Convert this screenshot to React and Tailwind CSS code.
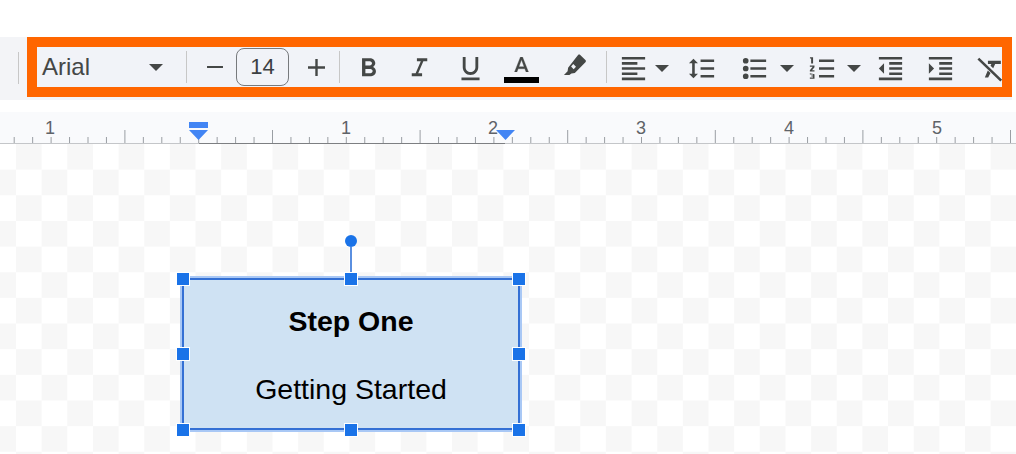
const ICONS = {
  bold: 'M15.6 10.79c.97-.67 1.65-1.77 1.65-2.79 0-2.26-1.75-4-4-4H7v14h7.04c2.09 0 3.71-1.7 3.71-3.79 0-1.52-.86-2.82-2.15-3.42zM9.6 6.3h3.4c.95 0 1.7.75 1.7 1.7s-.75 1.7-1.7 1.7H9.6V6.3zm3.9 9.4H9.6v-3.4h3.9c.95 0 1.7.75 1.7 1.7s-.75 1.7-1.7 1.7z',
  italic: 'M10 4v2.4h3L9 15.6H6V18h8v-2.4h-3l4-9.2h3V4z',
  underline: 'M12 17c3.31 0 6-2.69 6-6V3h-2.2v8c0 2.1-1.7 3.8-3.8 3.8S8.2 13.1 8.2 11V3H6v8c0 3.31 2.69 6 6 6zm-7 2v2h14v-2H5z',
  highlight: 'M18 1.6l4 3.8c.5.5.5 1.2 0 1.7l-8.2 8.3-2.6.5-1.6 1.2H5.4l2.8-3 .4-2.6 7.7-9.9c.5-.5 1.2-.5 1.7 0zM12.6 8.6l-1.7 1.9 2 2 1.8-1.9z',
  align: 'M15 15H3v2h12v-2zm0-8H3v2h12V7zM3 13h18v-2H3v2zm0 8h18v-2H3v2zM3 3v2h18V3H3z',
  spacing: 'M6 8h2.5L5 4.5 1.5 8H4v8H1.5L5 19.5 8.5 16H6V8zm4.5-3v2H21V5H10.5zm0 14H21v-2H10.5v2zm0-6H21v-2H10.5v2z',
  bullets: 'M5.2 9.8a2.2 2.2 0 1 0 0 4.4 2.2 2.2 0 0 0 0-4.4zm0-6a2.2 2.2 0 1 0 0 4.4 2.2 2.2 0 0 0 0-4.4zm0 12a2.2 2.2 0 1 0 0 4.4 2.2 2.2 0 0 0 0-4.4zM8.8 19H21v-2H8.8v2zm0-6H21v-2H8.8v2zm0-8v2H21V5H8.8z',
  numbers: 'M2.2 16.6h2.4v.8H3.4v.8h1.2v.8H2.2v1h3.6v-3.6l-3.6-.8v1zM3.2 8.2h1.5V3.2H2.3v1.1h.9V8.2zM2.2 10.7h2.2L2.2 13.4v1h3.6v-1.1H3.9l1.9-2.3v-1.4H2.2v1.1zM9.3 5v2H21V5H9.3zm0 14H21v-2H9.3v2zm0-6H21v-2H9.3v2z',
  outdent: 'M11 17h10v-2H11v2zm-8-5l4 4V8l-4 4zm0 9h18v-2H3v2zM3 3v2h18V3H3zm8 6h10V7H11v2zm0 4h10v-2H11v2z',
  indent: 'M3 21h18v-2H3v2zM3 8v8l4-4-4-4zm8 9h10v-2H11v2zM3 3v2h18V3H3zm8 6h10V7H11v2zm0 4h10v-2H11v2z',
  clear: 'M3.3 3.7L21 20.7l-1.4 1.4L1.9 5.1zM10 6h10v2.6h-4.4l-1.5 3.2-2.1-2 .7-1.2H10zM9.9 13.5l2.1 2-1.8 3.4H7.6z',
};

const INCH = 147.6;
const ORIGIN = 198.7;
const TICKS = Array.from({ length: 56 }, (_, i) => i - 10);
const LABELS = [
  { text: '1', x: 50 },
  { text: '1', x: 346 },
  { text: '2', x: 493 },
  { text: '3', x: 641 },
  { text: '4', x: 789 },
  { text: '5', x: 937 },
];
const HANDLES = [
  'left-[-8px] top-[-8px]',
  'left-[160px] top-[-8px]',
  'right-[-8px] top-[-8px]',
  'left-[-8px] top-[67px]',
  'right-[-8px] top-[67px]',
  'left-[-8px] bottom-[-9px]',
  'left-[160px] bottom-[-9px]',
  'right-[-8px] bottom-[-9px]',
];

function Icon({ name, className = '' }) {
  return (
    <svg viewBox="0 0 24 24" className={`mt-[2px] h-[31px] w-[31px] shrink-0 fill-[#444746] ${className}`}>
      <path d={ICONS[name]} />
    </svg>
  );
}

function Caret({ className = '' }) {
  return (
    <svg viewBox="0 0 14 7" className={`h-[7px] w-[14px] shrink-0 fill-[#444746] ${className}`}>
      <path d="M0 0h14L7 7z" />
    </svg>
  );
}

function Divider() {
  return <div className="h-[32px] w-px shrink-0 bg-[#c7c7c7]" />;
}

function Toolbar() {
  return (
    <div className="flex h-[63px] bg-[#f3f4f7] pl-[18px]">
      <div className="mt-[15px] h-[32px] w-px bg-[#c7c7c7]" />
      <div className="ml-2 h-[60px] w-[985px] shrink-0 border-[10px] border-[#ff6600]">
        <div className="flex h-full items-center bg-[#f1f3f8] text-[#444746]">
          <div className="flex w-[149px] shrink-0 items-center justify-between pl-[5px] pr-[23px]">
            <span className="text-[24px] leading-none">Arial</span>
            <Caret />
          </div>
          <Divider />
          <svg viewBox="0 0 16 2.4" className="ml-[20px] h-[2.4px] w-[16px] shrink-0 fill-[#444746]">
            <path d="M0 0h16v2.4H0z" />
          </svg>
          <div className="ml-[13px] flex h-[38px] w-[53px] shrink-0 items-center justify-center rounded-lg border border-[#777a7d] text-[22px] leading-none text-[#3c4043]">
            14
          </div>
          <svg viewBox="0 0 17 17" className="ml-[19px] h-[17px] w-[17px] shrink-0 fill-[#444746]">
            <path d="M7.3 0h2.4v7.3H17v2.4H9.7V17H7.3V9.7H0V7.3h7.3z" />
          </svg>
          <div className="ml-[14px] shrink-0">
            <Divider />
          </div>
          <div className="ml-[13px] flex shrink-0 items-center gap-[20px]">
            <Icon name="bold" />
            <Icon name="italic" />
            <Icon name="underline" />
            <div className="flex h-[40px] w-[31px] shrink-0 flex-col items-center pt-[10px]">
              <svg viewBox="5.5 3 13 14" className="h-[15px] w-[15px] shrink-0 fill-[#444746] stroke-[#444746] stroke-[0.3]">
                <path d="M11 3L5.5 17h2.25l1.12-3h6.25l1.12 3h2.25L13 3h-2zm-1.38 9L12 5.67 14.38 12H9.62z" />
              </svg>
              <div className="mt-[5px] h-[6px] w-[35px] shrink-0 bg-black" />
            </div>
            <Icon name="highlight" />
          </div>
          <div className="ml-[18px] shrink-0">
            <Divider />
          </div>
          <Icon name="align" className="ml-[11px]" />
          <Caret className="ml-[6px] mt-[2px]" />
          <Icon name="spacing" className="ml-[18px]" />
          <Icon name="bullets" className="ml-[21px]" />
          <Caret className="ml-[10px] mt-[2px]" />
          <Icon name="numbers" className="ml-[13px]" />
          <Caret className="ml-[9px] mt-[2px]" />
          <Icon name="outdent" className="ml-[14px]" />
          <Icon name="indent" className="ml-[19px]" />
          <Icon name="clear" className="ml-[19px]" />
        </div>
      </div>
      <div className="h-full w-[4px] shrink-0 bg-[#fdfdfd]" />
    </div>
  );
}

function Ruler() {
  return (
    <div className="h-[32px] bg-[#f9fafc]">
      <svg width="1016" height="32" className="block">
        {TICKS.map((i) => {
          const x = ORIGIN + (i * INCH) / 8;
          const tall = ((i % 8) + 8) % 8 === 4;
          return <line key={i} x1={x} x2={x} y1={tall ? 18 : 25} y2="31" stroke="#9a9ea3" />;
        })}
        <line x1="0" x2="1016" y1="31.5" y2="31.5" stroke="#c4c6c9" />
        <line x1="199" x2="505" y1="31.5" y2="31.5" stroke="#7d7f82" />
        {LABELS.map((label) => (
          <text key={label.x} x={label.x} y="21.5" textAnchor="middle" fontSize="18" fill="#5f6368">
            {label.text}
          </text>
        ))}
        <path d="M189 10h19v6h-19zM189 18h19l-9.5 10zM496 18h19l-9.5 10z" fill="#4285f4" />
      </svg>
    </div>
  );
}

function Shape() {
  return (
    <div className="relative ml-[182px] mt-[134px] h-[152px] w-[338px] border-2 border-[#3470d4] bg-[#cfe2f3] shadow-[0_0_0_2px_#a9c8f5]">
      <div className="absolute left-[166px] top-[-33px] h-[26px] w-[2px] bg-[#5a8fe0]" />
      <div className="absolute left-[161px] top-[-45px] h-[12px] w-[12px] rounded-full bg-[#1a73e8]" />
      {HANDLES.map((position) => (
        <div
          key={position}
          className={`absolute h-[14px] w-[14px] border border-white bg-[#1a73e8] ${position}`}
        />
      ))}
      <div className="flex h-full flex-col items-center pt-[25px] text-[28.5px] leading-[32px] text-black">
        <span className="font-bold">Step One</span>
        <span className="mt-[36px]">Getting Started</span>
      </div>
    </div>
  );
}

export default function App() {
  return (
    <div className="h-[454px] w-[1016px] overflow-hidden bg-white font-['Liberation_Sans',Arial,sans-serif]">
      <div className="h-[37px]" />
      <Toolbar />
      <div className="h-[12px]" />
      <Ruler />
      <div className="h-[310px] overflow-hidden bg-[conic-gradient(#ffffff_25%,#f7f7f7_0_50%,#ffffff_0_75%,#f7f7f7_0)] bg-[size:51.3px_51.3px] bg-[position:16px_0]">
        <Shape />
      </div>
    </div>
  );
}
